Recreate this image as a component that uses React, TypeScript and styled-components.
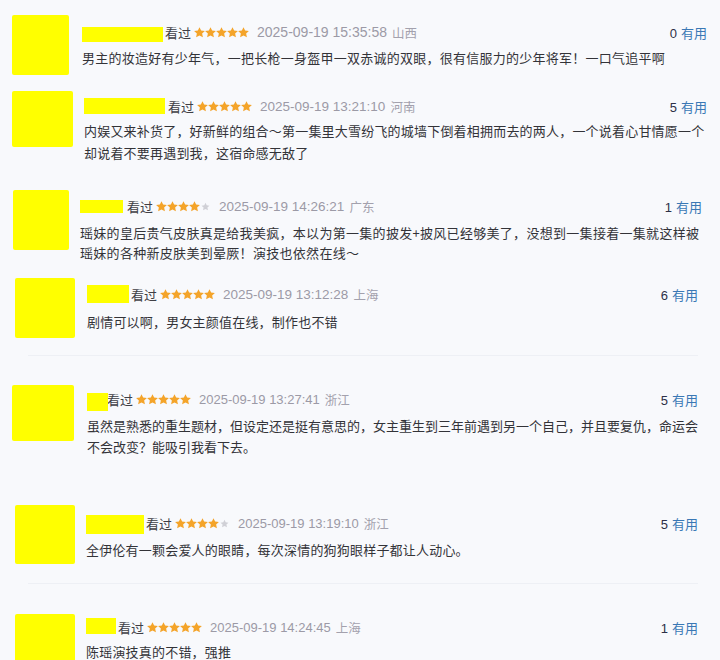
import React from "react";
import styled, { createGlobalStyle } from "styled-components";

const Global = createGlobalStyle`
  html, body { margin: 0; padding: 0; background: #f8f9fc; }
  body {
    width: 720px; height: 660px; overflow: hidden;
    font-family: "Liberation Sans", "Noto Sans CJK SC", sans-serif;
    color: #333;
  }
`;

const Page = styled.div`
  display: flex;
  flex-direction: column;
  padding-top: 15px;
  width: 720px;
  box-sizing: border-box;
`;

const Row = styled.div<{ $h: number; $pl: number; $pr: number }>`
  position: relative;
  display: flex;
  align-items: flex-start;
  height: ${(p) => p.$h}px;
  padding-left: ${(p) => p.$pl}px;
  padding-right: ${(p) => p.$pr}px;
  box-sizing: border-box;
  flex-shrink: 0;
`;

const Divider = styled.div<{ $top: number }>`
  position: absolute;
  left: 28px;
  right: 22px;
  top: ${(p) => p.$top}px;
  height: 1px;
  background: #eef0f5;
`;

const Avatar = styled.div<{ $w: number; $h: number }>`
  width: ${(p) => p.$w}px;
  height: ${(p) => p.$h}px;
  background: #ffff00;
  border-radius: 2px;
  flex-shrink: 0;
`;

const Body = styled.div<{ $gap: number; $pt: number }>`
  flex: 1;
  display: flex;
  flex-direction: column;
  margin-left: ${(p) => p.$gap}px;
  padding-top: ${(p) => p.$pt}px;
`;

const Meta = styled.div`
  display: flex;
  align-items: center;
  justify-content: space-between;
  height: 18px;
`;

const MetaLeft = styled.div`
  display: flex;
  align-items: center;
  font-size: 13px;
  white-space: nowrap;
`;

const NameBar = styled.div<{ $w: number; $h: number; $dy: number; $mr: number }>`
  width: ${(p) => p.$w}px;
  height: ${(p) => p.$h}px;
  background: #ffff00;
  margin-right: ${(p) => p.$mr}px;
  transform: translateY(${(p) => p.$dy}px);
`;

const Watched = styled.span`
  color: #3f3f45;
  font-size: 13px;
  margin-right: 3px;
`;

const Stars = styled.span`
  display: inline-flex;
  align-items: center;
  margin-right: 8px;
`;

const DateText = styled.span<{ $fs: number }>`
  color: #9c9aa6;
  font-size: ${(p) => p.$fs}px;
  margin-right: 5px;
`;

const Region = styled.span`
  color: #a3a1ad;
  font-size: 12.5px;
`;

const Useful = styled.div<{ $mr: number }>`
  font-size: 13px;
  color: #2d3047;
  white-space: nowrap;
  margin-right: ${(p) => p.$mr}px;
  span {
    color: #3a78b5;
    margin-left: 4px;
  }
`;

const Text = styled.div<{ $mt: number; $lh: number; $ls: number }>`
  margin-top: ${(p) => p.$mt}px;
  font-size: 13px;
  line-height: ${(p) => p.$lh}px;
  letter-spacing: ${(p) => p.$ls}px;
  color: #333338;
  font-family: "Noto Sans CJK SC", "Liberation Sans", sans-serif;
`;

const Star = ({ on }: { on: boolean }) =>
  on ? (
    <svg width="11" height="11" viewBox="0.5 0.5 23 23">
      <path
        d="M12 0.8l3.4 7.2 7.9.9-5.8 5.4 1.6 7.8L12 18.2 4.9 22.1l1.6-7.8L.7 8.9l7.9-.9z"
        fill="#f4a42a"
      />
    </svg>
  ) : (
    <svg width="11" height="11" viewBox="0.5 0.5 23 23">
      <path
        d="M12 4.2l2.5 5.3 5.8.7-4.3 4 1.2 5.7L12 17.1l-5.2 2.8 1.2-5.7-4.3-4 5.8-.7z"
        fill="#d0d0d6"
      />
    </svg>
  );

type Review = {
  h: number;
  pl: number;
  pr: number;
  ur: number;
  aw: number;
  ah: number;
  gap: number;
  pt: number;
  nw: number;
  nh: number;
  ndy: number;
  nmr: number;
  stars: number;
  date: string;
  dfs: number;
  region: string;
  count: number;
  text: string;
  mt: number;
  lh: number;
  ls: number;
  divider?: number;
};

const reviews: Review[] = [
  {
    h: 76, pl: 12, pr: 13, ur: 0, aw: 57, ah: 60, gap: 13, pt: 8, nw: 81, nh: 15, ndy: 2, nmr: 2,
    stars: 5, date: "2025-09-19 15:35:58", dfs: 14, region: "山西", count: 0,
    text: "男主的妆造好有少年气，一把长枪一身盔甲一双赤诚的双眼，很有信服力的少年将军！一口气追平啊",
    mt: 7, lh: 20, ls: 0.25,
  },
  {
    h: 99, pl: 12, pr: 13, ur: 0, aw: 61, ah: 56, gap: 11, pt: 6, nw: 81, nh: 16, ndy: 0, nmr: 3,
    stars: 5, date: "2025-09-19 13:21:10", dfs: 13.5, region: "河南", count: 5,
    text: "内娱又来补货了，好新鲜的组合～第一集里大雪纷飞的城墙下倒着相拥而去的两人，一个说着心甘情愿一个却说着不要再遇到我，这宿命感无敌了",
    mt: 5, lh: 22, ls: 0.2,
  },
  {
    h: 88, pl: 13, pr: 10, ur: 8, aw: 56, ah: 60, gap: 11, pt: 7, nw: 43, nh: 13, ndy: 0, nmr: 4,
    stars: 4, date: "2025-09-19 14:26:21", dfs: 13.5, region: "广东", count: 1,
    text: "瑶妹的皇后贵气皮肤真是给我美疯，本以为第一集的披发+披风已经够美了，没想到一集接着一集就这样被瑶妹的各种新皮肤美到晕厥！演技也依然在线～",
    mt: 8, lh: 20, ls: 0.3,
  },
  {
    h: 107, pl: 15, pr: 22, ur: 0, aw: 60, ah: 60, gap: 12, pt: 7, nw: 42, nh: 18, ndy: 0, nmr: 2,
    stars: 5, date: "2025-09-19 13:12:28", dfs: 13.5, region: "上海", count: 6,
    text: "剧情可以啊，男女主颜值在线，制作也不错",
    mt: 9, lh: 20, ls: 0.2, divider: 77,
  },
  {
    h: 120, pl: 12, pr: 22, ur: 0, aw: 62, ah: 56, gap: 13, pt: 5, nw: 21, nh: 18, ndy: 3, nmr: -1,
    stars: 5, date: "2025-09-19 13:27:41", dfs: 13, region: "浙江", count: 5,
    text: "虽然是熟悉的重生题材，但设定还是挺有意思的，女主重生到三年前遇到另一个自己，并且要复仇，命运会不会改变？能吸引我看下去。",
    mt: 7, lh: 21, ls: 0,
  },
  {
    h: 109, pl: 15, pr: 22, ur: 0, aw: 60, ah: 59, gap: 11, pt: 9, nw: 58, nh: 19, ndy: 1, nmr: 2,
    stars: 4, date: "2025-09-19 13:19:10", dfs: 13, region: "浙江", count: 5,
    text: "全伊伦有一颗会爱人的眼睛，每次深情的狗狗眼样子都让人动心。",
    mt: 8, lh: 20, ls: 0.2, divider: 78,
  },
  {
    h: 60, pl: 15, pr: 22, ur: 0, aw: 60, ah: 60, gap: 11, pt: 4, nw: 30, nh: 16, ndy: -1, nmr: 2,
    stars: 5, date: "2025-09-19 14:24:45", dfs: 13, region: "上海", count: 1,
    text: "陈瑶演技真的不错，强推",
    mt: 6, lh: 20, ls: 0.2,
  },
];

export default function App() {
  return (
    <>
      <Global />
      <Page>
        {reviews.map((r, i) => (
          <Row key={i} $h={r.h} $pl={r.pl} $pr={r.pr}>
            <Avatar $w={r.aw} $h={r.ah} />
            <Body $gap={r.gap} $pt={r.pt}>
              <Meta>
                <MetaLeft>
                  <NameBar $w={r.nw} $h={r.nh} $dy={r.ndy} $mr={r.nmr} />
                  <Watched>看过</Watched>
                  <Stars>
                    {[0, 1, 2, 3, 4].map((k) => (
                      <Star key={k} on={k < r.stars} />
                    ))}
                  </Stars>
                  <DateText $fs={r.dfs}>{r.date}</DateText>
                  <Region>{r.region}</Region>
                </MetaLeft>
                <Useful $mr={r.ur}>
                  {r.count}
                  <span>有用</span>
                </Useful>
              </Meta>
              <Text $mt={r.mt} $lh={r.lh} $ls={r.ls}>
                {r.text}
              </Text>
            </Body>
            {r.divider !== undefined && <Divider $top={r.divider} />}
          </Row>
        ))}
      </Page>
    </>
  );
}
